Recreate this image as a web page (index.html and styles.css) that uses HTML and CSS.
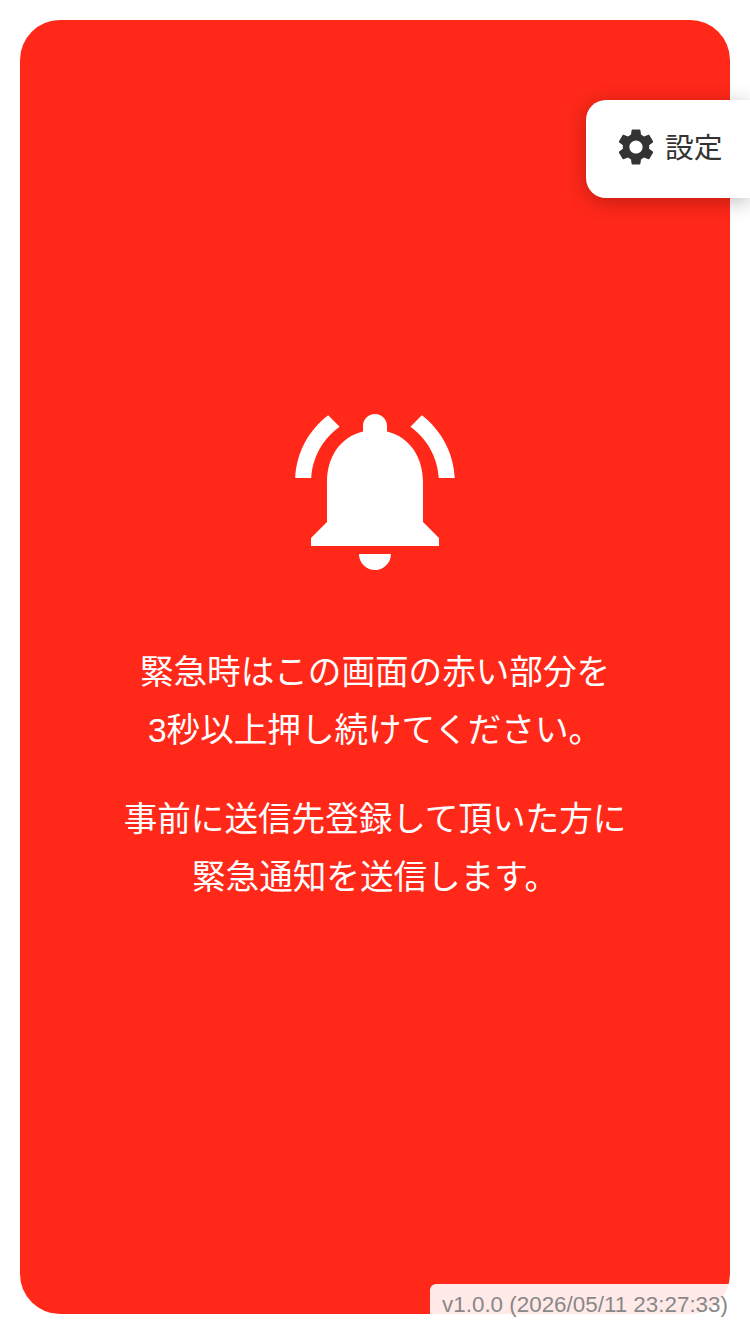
FILE: index.html
```html
<!DOCTYPE html>
<html lang="ja">
<head>
    <meta charset="UTF-8">
    <meta name="viewport" content="width=device-width, initial-scale=1.0">
    <title>緊急通知</title>
    <link rel="stylesheet" href="styles.css">
</head>
<body>
    <div class="panel">
        <svg class="bell" viewBox="0 0 24 24" aria-hidden="true">
            <path d="M7.58 4.08L6.15 2.65C3.75 4.48 2.17 7.3 2.03 10.5h2c.15-2.65 1.51-4.97 3.55-6.42zm12.39 6.42h2c-.15-3.2-1.73-6.02-4.12-7.85l-1.42 1.43c2.02 1.45 3.39 3.77 3.54 6.42zM18 11c0-3.07-1.64-5.64-4.5-6.32V4c0-.83-.67-1.5-1.5-1.5s-1.5.67-1.5 1.5v.68C7.63 5.36 6 7.92 6 11v5l-2 2v1h16v-1l-2-2v-5zm-6 11c.14 0 .27-.01.4-.04.65-.14 1.18-.58 1.44-1.18.1-.24.15-.5.15-.78h-4c.01 1.1.9 2 2.01 2z"/>
        </svg>
        <p class="message">緊急時はこの画面の赤い部分を<br>3秒以上押し続けてください。</p>
        <p class="message">事前に送信先登録して頂いた方に<br>緊急通知を送信します。</p>
        <div class="version">v1.0.0 (2026/05/11 23:27:33)</div>
    </div>

    <button class="settings">
        <svg class="gear" viewBox="0 0 24 24" aria-hidden="true">
            <path d="M19.14 12.94c.04-.3.06-.61.06-.94 0-.32-.02-.64-.07-.94l2.03-1.58c.18-.14.23-.41.12-.61l-1.92-3.32c-.12-.22-.37-.29-.59-.22l-2.39.96c-.5-.38-1.03-.7-1.62-.94l-.36-2.54c-.04-.24-.24-.41-.48-.41h-3.84c-.24 0-.43.17-.47.41l-.36 2.54c-.59.24-1.13.57-1.62.94l-2.39-.96c-.22-.08-.47 0-.59.22L2.74 8.87c-.12.21-.08.47.12.61l2.03 1.58c-.05.3-.09.63-.09.94s.02.64.07.94l-2.03 1.58c-.18.14-.23.41-.12.61l1.92 3.32c.12.22.37.29.59.22l2.39-.96c.5.38 1.03.7 1.62.94l.36 2.54c.05.24.24.41.48.41h3.84c.24 0 .44-.17.47-.41l.36-2.54c.59-.24 1.13-.56 1.62-.94l2.39.96c.22.08.47 0 .59-.22l1.92-3.32c.12-.22.07-.47-.12-.61l-2.01-1.58zM12 15.6c-1.98 0-3.6-1.62-3.6-3.6s1.62-3.6 3.6-3.6 3.6 1.62 3.6 3.6-1.62 3.6-3.6 3.6z"/>
        </svg>
        <span class="settings-label">設定</span>
    </button>
</body>
</html>
```

FILE: styles.css
```css
html, body {
    height: 100%;
}
body {
    margin: 0;
    padding: 20px;
    box-sizing: border-box;
    background-color: #fff;
    font-family: "Liberation Sans", "Noto Sans CJK JP", sans-serif;
    overflow: hidden;
}
.panel {
    position: relative;
    height: 1294px;
    padding-bottom: 2px;
    box-sizing: border-box;
    background-color: #ff2819;
    border-radius: 40px;
    color: #fff;
    display: flex;
    flex-direction: column;
    align-items: center;
    justify-content: center;
}
.bell {
    width: 192px;
    height: 192px;
    fill: #fff;
    margin-bottom: 58px;
}
.message {
    margin: 0 0 31px;
    font-size: 33.6px;
    line-height: 58px;
    text-align: center;
}
.version {
    position: absolute;
    right: 0;
    bottom: 0;
    height: 30px;
    padding: 0 2px 0 12px;
    box-sizing: border-box;
    background-color: rgba(255, 255, 255, 0.9);
    border-top-left-radius: 6px;
    color: #888;
    font-size: 22.4px;
    line-height: 41px;
    white-space: nowrap;
}
.settings {
    position: absolute;
    top: 100px;
    right: 0;
    width: 164px;
    height: 98px;
    padding: 0 0 4px 28px;
    box-sizing: border-box;
    display: flex;
    align-items: center;
    gap: 8px;
    border: none;
    border-radius: 20px 0 0 20px;
    background-color: #fff;
    box-shadow: 0 4px 20px rgba(0, 0, 0, 0.25);
    color: #333;
    font-family: inherit;
    font-size: 28.8px;
}
.settings-label {
    margin: -4px 0 0 -1px;
}
.gear {
    width: 44px;
    height: 44px;
    fill: #333;
    flex-shrink: 0;
}
```
